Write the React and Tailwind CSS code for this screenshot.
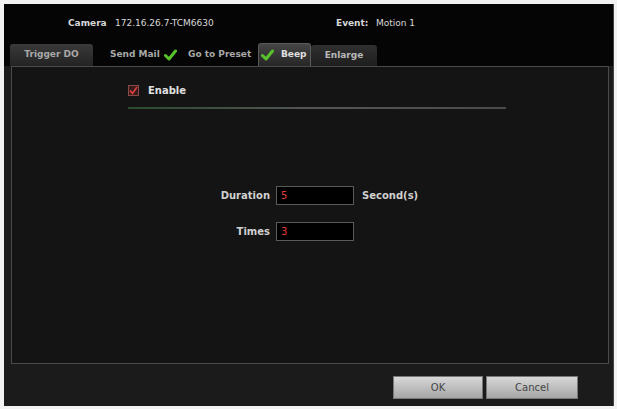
import React from 'react';

const font = { fontFamily: '"DejaVu Sans", "Open Sans", sans-serif' };

const GreenCheck = () => (
  <svg width="13" height="12" viewBox="0 0 13 12" className="shrink-0">
    <path d="M1.5 6.5 L5 10 L11.5 2" fill="none" stroke="#57c22a" strokeWidth="3" strokeLinecap="round" strokeLinejoin="round" />
  </svg>
);

const Field = ({ label, value, suffix }) => (
  <div className="flex items-center">
    <span className="w-[96px] text-right pr-[6px] text-[10px] font-bold text-[#d0d0d0]">{label}</span>
    <div className="w-[78px] h-[19px] bg-black border border-[#5a5a5a] flex items-center pl-[4px] text-[10px] text-[#e03a3a]">
      {value}
    </div>
    {suffix && <span className="pl-[8px] text-[10px] font-bold text-[#d0d0d0]">{suffix}</span>}
  </div>
);

export default function App() {
  return (
    <div className="w-[617px] h-[409px] bg-[#f2f2f2] pt-[4px] pl-[4px] pr-[3px] pb-[3px]" style={font}>
      <div className="h-full flex flex-col bg-[#1b1b1b] border-r border-[#444]">
        {/* header */}
        <div className="h-[39px] bg-[#050505] flex items-center text-[9px] text-[#d8d8d8]">
          <span className="ml-[64px] w-[47px] font-bold">Camera</span>
          <span className="w-[221px]">172.16.26.7-TCM6630</span>
          <span className="w-[40px] font-bold">Event:</span>
          <span>Motion 1</span>
        </div>

        {/* tabs */}
        <div className="h-[23px] bg-[#050505] flex items-end pl-[6px] text-[9px] font-bold text-[#a8a8a8]">
          <div className="h-[22px] w-[83px] rounded-t-[3px] bg-gradient-to-b from-[#3a3a3a] to-[#232323] flex items-center justify-center">
            Trigger DO
          </div>
          <div className="h-[22px] w-[90px] flex items-center pl-[17px] gap-[4px]">
            <span>Send Mail</span>
            <GreenCheck />
          </div>
          <div className="h-[22px] w-[75px] flex items-center pl-[5px]">Go to Preset</div>
          <div className="h-[23px] w-[53px] rounded-t-[3px] border border-b-0 border-[#5a5a5a] bg-gradient-to-b from-[#454545] to-[#262626] flex items-center pl-[2px] gap-[7px] text-[#e0e0e0]">
            <GreenCheck />
            <span>Beep</span>
          </div>
          <div className="h-[21px] w-[66px] rounded-t-[3px] bg-gradient-to-b from-[#303030] to-[#1e1e1e] flex items-center justify-center text-[#b8b8b8]">
            Enlarge
          </div>
        </div>

        {/* panel */}
        <div className="flex-1 ml-[7px] mr-[4px] border border-[#4a4a4a] bg-[#141414] flex flex-col">
          <div className="ml-[116px] mt-[16px] flex items-center gap-[9px]">
            <div className="w-[11px] h-[11px] bg-[#3a1a1a] border border-[#8a4a4a] flex items-center justify-center">
              <svg width="9" height="9" viewBox="0 0 9 9">
                <path d="M1 4.5 L3.5 7.5 L8 1" fill="none" stroke="#e04040" strokeWidth="1.6" />
              </svg>
            </div>
            <span className="text-[10px] font-bold text-[#e0e0e0]">Enable</span>
          </div>
          <div className="ml-[116px] mt-[9px] w-[378px] h-[2px] bg-gradient-to-r from-[#2a4a30] via-[#555] to-[#4a4a4a]" />

          <div className="mt-[77px] ml-[168px] flex flex-col gap-[17px]">
            <Field label="Duration" value="5" suffix="Second(s)" />
            <Field label="Times" value="3" />
          </div>
        </div>

        {/* footer */}
        <div className="h-[42px] flex items-center justify-end pr-[35px] pt-[5px] gap-[3px] text-[10px] text-[#444]">
          <button className="w-[90px] h-[23px] border border-[#777] bg-gradient-to-b from-[#d8d8d8] to-[#a6a6a6]">OK</button>
          <button className="w-[92px] h-[23px] border border-[#777] bg-gradient-to-b from-[#d8d8d8] to-[#a6a6a6]">Cancel</button>
        </div>
      </div>
    </div>
  );
}
